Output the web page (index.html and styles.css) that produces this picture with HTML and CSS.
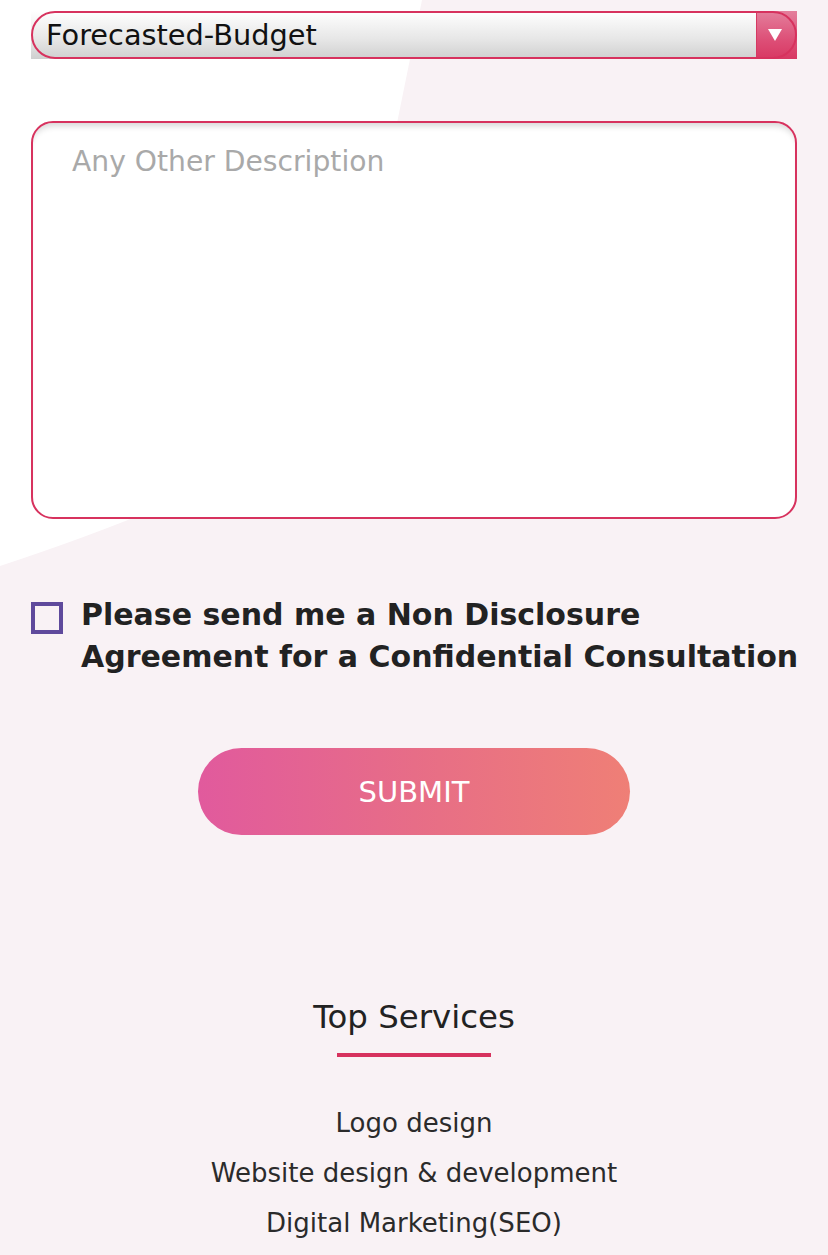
FILE: index.html
```html
<!DOCTYPE html>
<html lang="en">
<head>
<meta charset="utf-8">
<title>Contact form</title>
<link rel="stylesheet" href="styles.css">
</head>
<body>
<div class="page">
  <svg class="bg-shape" width="828" height="600" viewBox="0 0 828 600" aria-hidden="true">
    <path d="M0 0 H422 L396 128 Q 372 330 290 440 Q 200 500 0 566 Z" fill="#ffffff"/>
  </svg>
  <form class="form">
    <div class="select">
      <span class="select-text">Forecasted-Budget</span>
      <span class="select-arrow">
        <svg width="14" height="12" viewBox="0 0 14 12"><path d="M0 0 H14 L7 12 Z" fill="#fff"/></svg>
      </span>
      <span class="select-border"></span>
    </div>
    <div class="textarea"><span class="placeholder">Any Other Description</span></div>
    <label class="nda">
      <span class="checkbox"></span>
      <span class="nda-text">Please send me a Non Disclosure<br>Agreement for a Confidential Consultation</span>
    </label>
    <div class="submit-row"><button type="button" class="submit">SUBMIT</button></div>
  </form>
  <section class="services">
    <h2 class="services-title">Top Services</h2>
    <div class="services-rule"></div>
    <ul class="services-list">
      <li>Logo design</li>
      <li>Website design &amp; development</li>
      <li>Digital Marketing(SEO)</li>
    </ul>
  </section>
</div>
</body>
</html>
```
FILE: styles.css
```css
html, body {
  margin: 0;
  padding: 0;
  background: #f9f2f5;
}
body {
  font-family: "DejaVu Sans", "Liberation Sans", sans-serif;
  color: #222;
}
.page {
  position: relative;
  width: 828px;
  height: 1255px;
  overflow: hidden;
}
.bg-shape {
  position: absolute;
  left: 0;
  top: 0;
}
.form {
  position: relative;
  padding: 11px 31px 0 31px;
  display: flex;
  flex-direction: column;
}
.select {
  position: relative;
  height: 48px;
  display: flex;
  background: linear-gradient(#ffffff 0%, #e6e6e6 60%, #cfcfcf 100%);
}
.select-text {
  flex: 1;
  padding-left: 15px;
  font-size: 28.8px;
  line-height: 48px;
  color: #111;
  white-space: nowrap;
}
.select-arrow {
  width: 41px;
  display: flex;
  align-items: center;
  justify-content: center;
  background: linear-gradient(#e47f9c 0%, #dd4f77 60%, #d83863 100%);
  box-shadow: inset 1px 0 0 #d53a63;
  padding-right: 4px;
  box-sizing: border-box;
}
.select-border {
  position: absolute;
  inset: 0;
  border: 2px solid #d7325e;
  border-radius: 24px;
  pointer-events: none;
}
.textarea {
  margin-top: 62px;
  height: 398px;
  box-sizing: border-box;
  background: #fff;
  border: 2px solid #d7325e;
  border-radius: 22px;
  box-shadow: inset 0 7px 6px -4px rgba(0, 0, 0, 0.16);
  padding: 22px 39px;
}
.placeholder {
  font-size: 28.2px;
  line-height: 34px;
  color: #a9a9a9;
}
.nda {
  margin-top: 75px;
  display: flex;
  align-items: flex-start;
  gap: 18px;
}
.checkbox {
  flex: none;
  width: 32px;
  height: 32px;
  box-sizing: border-box;
  border: 4px solid #5f4a9c;
  margin-top: 8px;
}
.nda-text {
  font-weight: bold;
  font-size: 30px;
  line-height: 42px;
  color: #222;
  white-space: nowrap;
}
.submit-row {
  margin-top: 70px;
  display: flex;
  justify-content: center;
}
.submit {
  width: 432px;
  height: 87px;
  border: none;
  border-radius: 44px;
  background: linear-gradient(90deg, #e15a9d 0%, #e76d87 50%, #ef7f76 100%);
  color: #fff;
  font-family: "DejaVu Sans", "Liberation Sans", sans-serif;
  font-size: 29px;
  font-weight: normal;
  padding: 0;
}
.services {
  position: relative;
  margin-top: 164px;
  display: flex;
  flex-direction: column;
  align-items: center;
}
.services-title {
  margin: 0;
  font-size: 32.4px;
  line-height: 36px;
  font-weight: normal;
  color: #222;
}
.services-rule {
  margin-top: 18px;
  width: 154px;
  height: 4px;
  background: #d7325e;
}
.services-list {
  list-style: none;
  margin: 41px 0 0 0;
  padding: 0;
  text-align: center;
}
.services-list li {
  font-size: 26px;
  line-height: 50px;
  color: #2b2b2b;
}
```
